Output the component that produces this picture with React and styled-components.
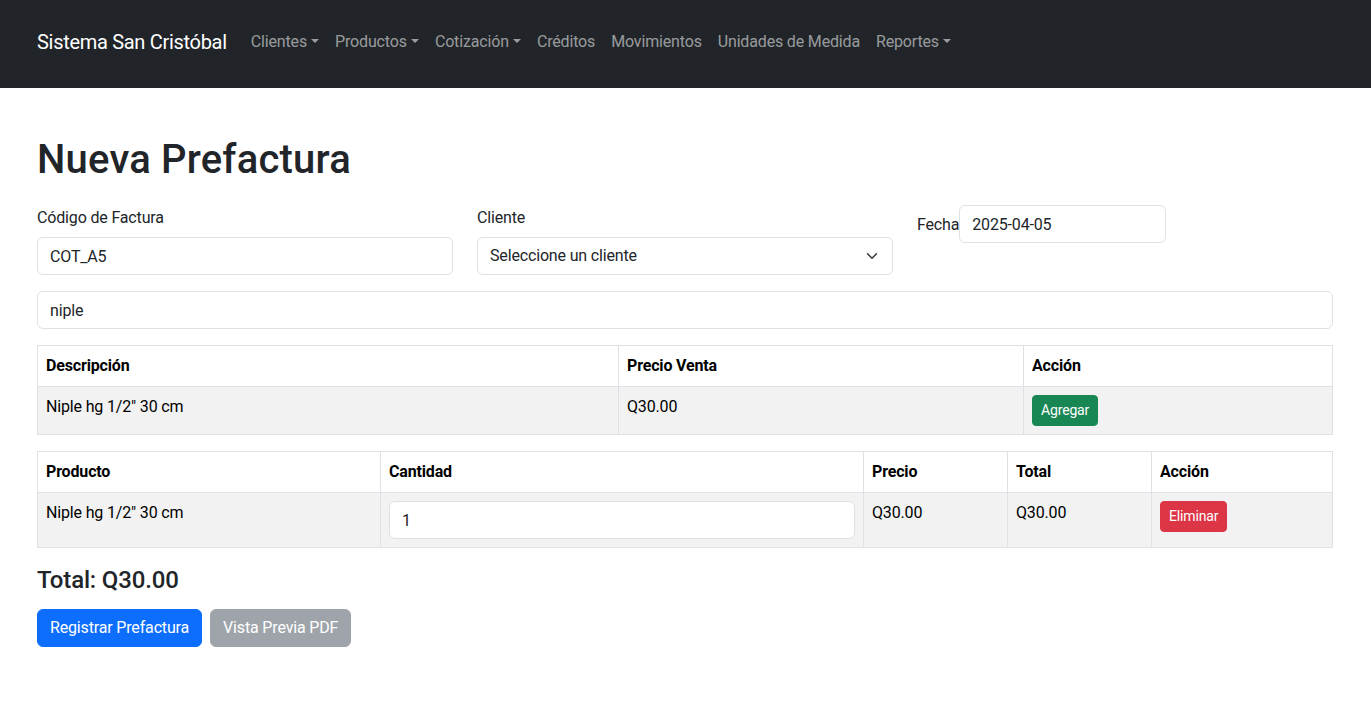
import React from "react";
import styled, { createGlobalStyle } from "styled-components";

const Global = createGlobalStyle`
  * { box-sizing: border-box; }
  body {
    margin: 0;
    font-family: Roboto, "Liberation Sans", Arial, sans-serif;
    font-size: 16px;
    line-height: 1.5;
    letter-spacing: -0.01em;
    color: #212529;
    background: #fff;
  }
`;

const Navbar = styled.nav`
  background: #212529;
  padding: 22px 0 26px;
`;

const Container = styled.div`
  max-width: 1321px;
  margin: 0 auto;
  padding: 0 13px 0 12px;
`;

const NavInner = styled(Container)`
  display: flex;
  align-items: center;
`;

const Brand = styled.a`
  font-size: 20px;
  line-height: 30px;
  letter-spacing: -0.3px;
  padding: 5px 0;
  margin-right: 16px;
  color: #fff;
  text-decoration: none;
  white-space: nowrap;
`;

const NavList = styled.ul`
  display: flex;
  list-style: none;
  margin: 0;
  padding: 0;
`;

const NavLink = styled.a`
  display: block;
  padding: 8px;
  color: rgba(255, 255, 255, 0.55);
  text-decoration: none;
  white-space: nowrap;
  ${(p) =>
    p.$dropdown &&
    `
    &::after {
      content: "";
      display: inline-block;
      margin-left: 0.255em;
      vertical-align: 0.255em;
      border-top: 0.3em solid;
      border-right: 0.3em solid transparent;
      border-left: 0.3em solid transparent;
      border-bottom: 0;
    }
  `}
`;

const Main = styled(Container)`
  padding-top: 48px;
`;

const Title = styled.h1`
  font-size: 40px;
  font-weight: 500;
  line-height: 1.2;
  letter-spacing: 0.005em;
  margin: 0 0 21px;
`;

const FormRow = styled.div`
  display: grid;
  grid-template-columns: repeat(3, 1fr);
  column-gap: 24px;
  margin-bottom: 16px;
`;

const Field = styled.div``;

const Label = styled.label`
  display: ${(p) => (p.$inline ? "inline" : "inline-block")};
  margin-bottom: ${(p) => (p.$inline ? "0" : "8px")};
  padding-top: ${(p) => (p.$inline ? "0" : "1px")};
  line-height: ${(p) => (p.$inline ? "24px" : "23px")};
`;

const Input = styled.input`
  display: ${(p) => (p.$w ? "inline-block" : "block")};
  width: ${(p) => p.$w || "100%"};
  height: 38px;
  padding: 6px 12px;
  font-family: inherit;
  font-size: 16px;
  line-height: 24px;
  letter-spacing: inherit;
  color: #212529;
  background: #fff;
  border: 1px solid #dee2e6;
  border-radius: 6px;
  outline: none;
  vertical-align: baseline;
`;

const SelectBox = styled.div`
  display: flex;
  align-items: center;
  justify-content: space-between;
  height: 38px;
  padding: 6px 12px 6px 12px;
  border: 1px solid #dee2e6;
  border-radius: 6px;
  background: #fff;
  color: #212529;
`;

const SearchWrap = styled.div`
  margin-bottom: 16px;
`;

const Table = styled.table`
  width: 100%;
  border-collapse: collapse;
  margin-bottom: 16px;
  color: #000;
  vertical-align: top;
  table-layout: fixed;
`;

const Th = styled.th`
  text-align: left;
  font-weight: 700;
  padding: 8px;
  border: 1px solid #dee2e6;
  background: #fff;
  width: ${(p) => p.$w || "auto"};
`;

const Td = styled.td`
  padding: 8px;
  border: 1px solid #dee2e6;
  background: #f2f2f2;
  vertical-align: top;
`;

const SmallBtn = styled.button`
  font-family: inherit;
  font-size: 14px;
  line-height: 21px;
  letter-spacing: inherit;
  padding: 4px 8px;
  border: 1px solid ${(p) => p.$bg};
  border-radius: 4px;
  background: ${(p) => p.$bg};
  color: #fff;
  cursor: pointer;
`;

const Total = styled.h4`
  font-size: 24px;
  font-weight: 500;
  line-height: 1.2;
  margin: 18px 0 14px;
  color: #212529;
`;

const Actions = styled.div`
  display: flex;
  gap: 8px;
`;

const Btn = styled.button`
  font-family: inherit;
  font-size: 16px;
  line-height: 24px;
  letter-spacing: inherit;
  padding: 6px 12px;
  border: 1px solid ${(p) => p.$bg};
  border-radius: 6px;
  background: ${(p) => p.$bg};
  color: #fff;
  opacity: ${(p) => (p.disabled ? 0.65 : 1)};
  cursor: pointer;
`;

const Chevron = () => (
  <svg width="16" height="12" viewBox="0 0 16 16" fill="none">
    <path d="m2 5 6 6 6-6" stroke="#343a40" strokeWidth="2" strokeLinecap="round" strokeLinejoin="round" />
  </svg>
);

export default function App() {
  const nav = [
    ["Clientes", true],
    ["Productos", true],
    ["Cotización", true],
    ["Créditos", false],
    ["Movimientos", false],
    ["Unidades de Medida", false],
    ["Reportes", true],
  ];
  return (
    <>
      <Global />
      <Navbar>
        <NavInner>
          <Brand href="#">Sistema San Cristóbal</Brand>
          <NavList>
            {nav.map(([t, d]) => (
              <li key={t}>
                <NavLink href="#" $dropdown={d}>
                  {t}
                </NavLink>
              </li>
            ))}
          </NavList>
        </NavInner>
      </Navbar>
      <Main>
        <Title>Nueva Prefactura</Title>
        <FormRow>
          <Field>
            <Label>Código de Factura</Label>
            <Input defaultValue="COT_A5" readOnly />
          </Field>
          <Field>
            <Label>Cliente</Label>
            <SelectBox>
              <span>Seleccione un cliente</span>
              <Chevron />
            </SelectBox>
          </Field>
          <Field>
            <Label $inline>Fecha</Label>
            <Input $w="207px" defaultValue="2025-04-05" readOnly />
          </Field>
        </FormRow>
        <SearchWrap>
          <Input defaultValue="niple" readOnly />
        </SearchWrap>
        <Table>
          <thead>
            <tr>
              <Th $w="581px">Descripción</Th>
              <Th $w="405px">Precio Venta</Th>
              <Th>Acción</Th>
            </tr>
          </thead>
          <tbody>
            <tr>
              <Td>Niple hg 1/2" 30 cm</Td>
              <Td>Q30.00</Td>
              <Td>
                <SmallBtn $bg="#198754">Agregar</SmallBtn>
              </Td>
            </tr>
          </tbody>
        </Table>
        <Table>
          <thead>
            <tr>
              <Th $w="343px">Producto</Th>
              <Th $w="483px">Cantidad</Th>
              <Th $w="144px">Precio</Th>
              <Th $w="144px">Total</Th>
              <Th>Acción</Th>
            </tr>
          </thead>
          <tbody>
            <tr>
              <Td>Niple hg 1/2" 30 cm</Td>
              <Td>
                <Input defaultValue="1" readOnly />
              </Td>
              <Td>Q30.00</Td>
              <Td>Q30.00</Td>
              <Td>
                <SmallBtn $bg="#dc3545">Eliminar</SmallBtn>
              </Td>
            </tr>
          </tbody>
        </Table>
        <Total>Total: Q30.00</Total>
        <Actions>
          <Btn $bg="#0d6efd">Registrar Prefactura</Btn>
          <Btn $bg="#6c757d" disabled>
            Vista Previa PDF
          </Btn>
        </Actions>
      </Main>
    </>
  );
}
